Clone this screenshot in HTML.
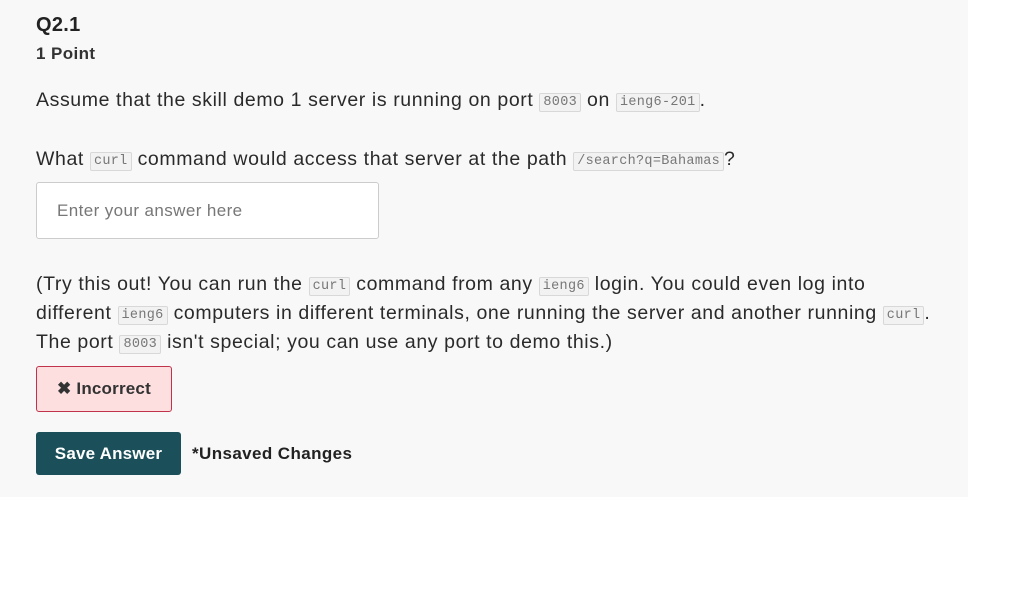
<!DOCTYPE html>
<html><head><meta charset="utf-8"><style>
body{margin:0;width:1024px;height:594px;background:#fff;font-family:"Liberation Sans",sans-serif;color:#2a2a2a;position:relative;overflow:hidden}
.panel{position:absolute;left:0;top:0;width:968px;height:497px;background:#f8f8f8}
.a{position:absolute;left:36px;white-space:nowrap}
code{font-family:"Liberation Mono",monospace;font-size:13.5px;line-height:14px;letter-spacing:0.3px;color:#777;background:#f2f2f2;border:1px solid #d8d8d8;border-radius:2px;padding:1px 3px;vertical-align:1px}
.t{font-size:19.5px;letter-spacing:0.6px}
</style></head><body>
<div class="panel"></div>
<div class="a" style="top:14px;font-size:20px;font-weight:bold;color:#222;letter-spacing:0.3px">Q2.1</div>
<div class="a" style="top:44px;font-size:17px;font-weight:bold;color:#333;letter-spacing:0.4px">1 Point</div>
<div class="a t" style="top:89px">Assume that the skill demo 1 server is running on port <code>8003</code> on <code>ieng6-201</code>.</div>
<div class="a t" style="top:148px">What <code>curl</code> command would access that server at the path <code>/search?q=Bahamas</code>?</div>
<div class="a" style="top:182px;width:341px;height:55px;background:#fff;border:1px solid #ccc;border-radius:3px"><span style="position:absolute;left:20px;top:18px;font-size:17px;letter-spacing:0.4px;color:#777">Enter your answer here</span></div>
<div class="a t" style="top:270px;line-height:29px">(Try this out! You can run the <code>curl</code> command from any <code>ieng6</code> login. You could even log into<br>different <code>ieng6</code> computers in different terminals, one running the server and another running <code>curl</code>.<br>The port <code>8003</code> isn't special; you can use any port to demo this.)</div>
<div class="a" style="top:366px;width:136px;height:46px;background:#fddfe0;border:1px solid #c0334a;border-radius:3px;box-sizing:border-box;font-size:17px;letter-spacing:0.2px;font-weight:bold;line-height:44px;text-align:center;color:#333">✖ Incorrect</div>
<div class="a" style="top:432px;width:145px;height:43px;background:#1b505a;border-radius:3px;color:#fff;font-size:17px;letter-spacing:0.2px;font-weight:bold;line-height:43px;text-align:center">Save Answer</div>
<div class="a" style="left:192px;top:444px;font-size:17px;letter-spacing:0.4px;font-weight:bold;color:#222">*Unsaved Changes</div>
</body></html>
